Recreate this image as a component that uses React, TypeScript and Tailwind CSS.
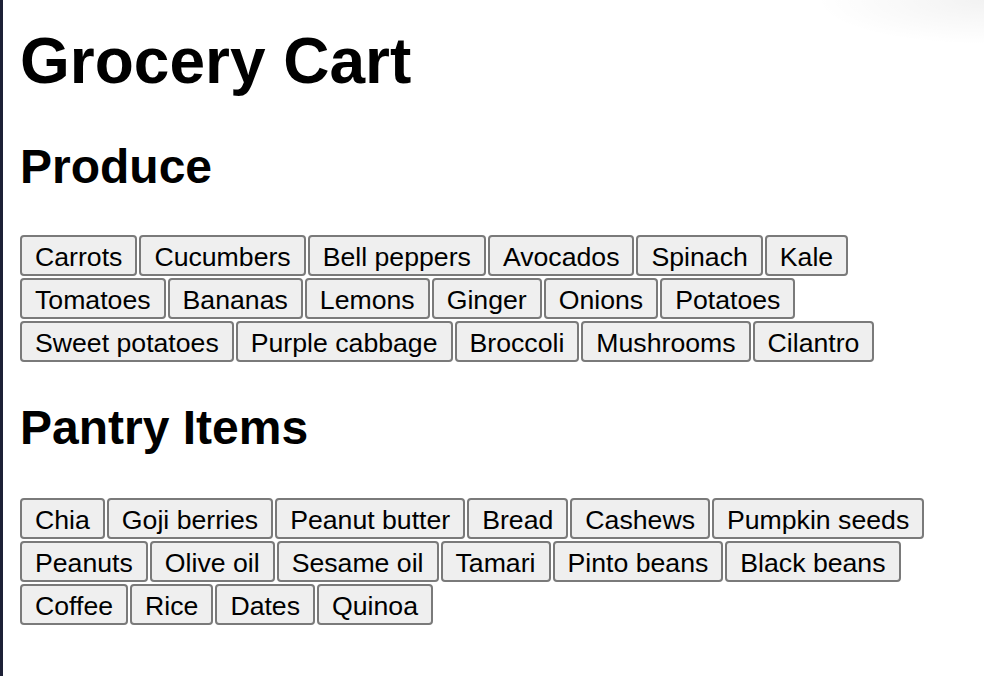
import React from 'react';

const produce = [
  'Carrots', 'Cucumbers', 'Bell peppers', 'Avocados', 'Spinach', 'Kale',
  'Tomatoes', 'Bananas', 'Lemons', 'Ginger', 'Onions', 'Potatoes',
  'Sweet potatoes', 'Purple cabbage', 'Broccoli', 'Mushrooms', 'Cilantro',
];

const pantry = [
  'Chia', 'Goji berries', 'Peanut butter', 'Bread', 'Cashews', 'Pumpkin seeds',
  'Peanuts', 'Olive oil', 'Sesame oil', 'Tamari', 'Pinto beans', 'Black beans',
  'Coffee', 'Rice', 'Dates', 'Quinoa',
];

// one row of grocery buttons, wraps like inline buttons do
function ItemList({ items }: { items: string[] }) {
  return (
    <div className="flex flex-wrap gap-[2px]">
      {items.map((item) => (
        <button
          key={item}
          className="h-[41px] px-[13px] pt-[3px] border-2 border-[#7a7a7a] rounded-[4px] bg-[#efefef] text-black text-[26.67px] leading-[31px] whitespace-nowrap"
        >
          {item}
        </button>
      ))}
    </div>
  );
}

export default function App() {
  return (
    <div
      className="relative h-screen overflow-hidden bg-white border-l-[3px] border-[#1d2036] pl-[17px] text-black"
      style={{ fontFamily: '"Liberation Sans", Arial, Helvetica, sans-serif' }}
    >
      <div className="absolute right-0 top-0 w-[170px] h-[45px] bg-[radial-gradient(ellipse_at_top_right,rgba(0,0,0,0.05),transparent_70%)]" />

      <h1 className="pt-[25px] text-[64px] leading-[72px] font-bold">Grocery Cart</h1>

      <h2 className="mt-[43px] mb-[41px] text-[48px] leading-[54px] font-bold">Produce</h2>
      <ItemList items={produce} />

      <h2 className="mt-[39px] mb-[43px] text-[48px] leading-[54px] font-bold">Pantry Items</h2>
      <ItemList items={pantry} />
    </div>
  );
}
